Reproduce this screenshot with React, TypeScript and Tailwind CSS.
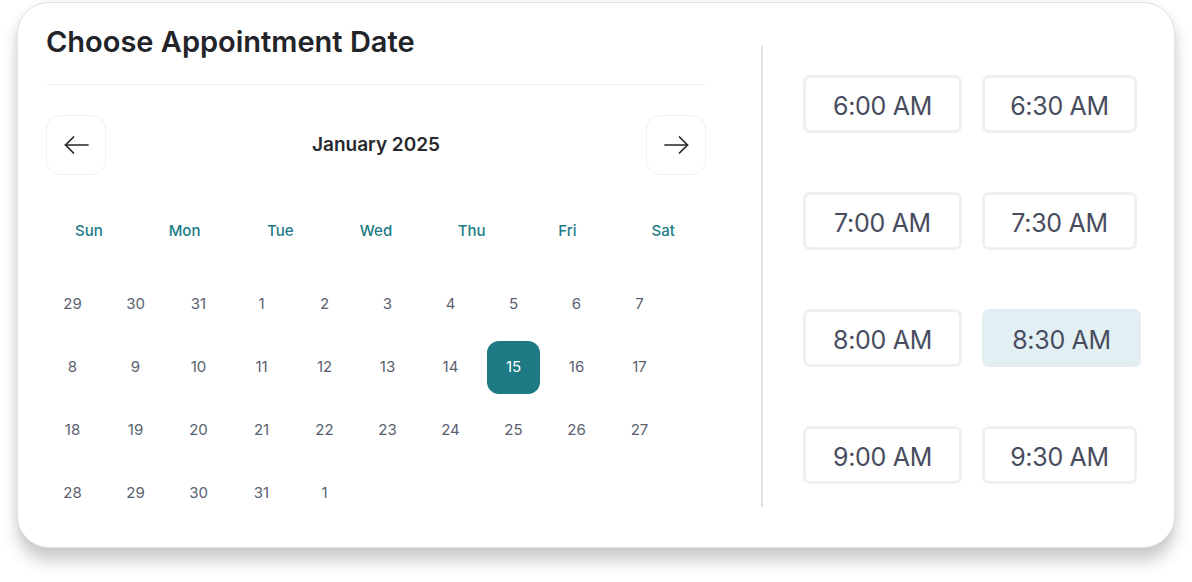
const days = ["Sun", "Mon", "Tue", "Wed", "Thu", "Fri", "Sat"]

const dates = [
    29, 30, 31, 1, 2, 3, 4, 5, 6, 7,
    8, 9, 10, 11, 12, 13, 14, 15, 16, 17,
    18, 19, 20, 21, 22, 23, 24, 25, 26, 27,
    28, 29, 30, 31, 1,
]

const slots = [
    ["6:00 AM", "6:30 AM"],
    ["7:00 AM", "7:30 AM"],
    ["8:00 AM", "8:30 AM"],
    ["9:00 AM", "9:30 AM"],
]

const Arrow = ({ flip }: { flip?: boolean }) => (
    <svg
        width="25"
        height="18"
        viewBox="0 0 25 18"
        fill="none"
        stroke="#232529"
        strokeWidth="1.7"
        strokeLinecap="round"
        strokeLinejoin="round"
        className={flip ? "-scale-x-100" : ""}
    >
        <path d="M24 9H1.5" />
        <path d="M9.5 1L1.5 9l8 8" />
    </svg>
)

const App = () => {
    return (
        <div className="w-[1192px] h-[582px] bg-white font-['Inter',sans-serif] pt-[2px] pl-[17px]">
            {/* Card */}
            <div className="flex w-[1158px] h-[546px] rounded-[32px] border border-[#e2e2e2] bg-white shadow-[0_13px_16px_rgba(0,0,0,0.2),0_0_8px_rgba(0,0,0,0.05)] pl-[28px]">
                {/* Calendar */}
                <div className="w-[660px] pt-[22px]">
                    <h1 className="text-[29px] leading-[34px] font-semibold text-[#222429]">
                        Choose Appointment Date
                    </h1>
                    <div className="mt-[25px] h-px bg-[#f0f1f3]" />

                    <div className="mt-[30px] flex items-center justify-between">
                        <button className="w-[60px] h-[60px] rounded-[14px] border border-[#efefef] flex items-center justify-center">
                            <Arrow />
                        </button>
                        <span className="text-[19px] font-semibold text-[#26282d]">
                            January 2025
                        </span>
                        <button className="w-[60px] h-[60px] rounded-[14px] border border-[#efefef] flex items-center justify-center">
                            <Arrow flip />
                        </button>
                    </div>

                    <div className="mt-[46px] grid grid-cols-7 gap-x-[10px]">
                        {days.map((d) => (
                            <div
                                key={d}
                                className="text-center text-[15px] leading-[20px] font-medium text-[#1c7b86]"
                            >
                                {d}
                            </div>
                        ))}
                    </div>

                    <div className="mt-[37px] grid grid-cols-[repeat(10,53px)] gap-[10px]">
                        {dates.map((d, i) => (
                            <div
                                key={i}
                                className={`h-[53px] flex items-center justify-center rounded-[12px] text-[15px] ${i === 17 ? "bg-[#1e7a84] text-white" : "text-[#5a5f70]"
                                    }`}
                            >
                                {d}
                            </div>
                        ))}
                    </div>
                </div>

                {/* Divider */}
                <div className="ml-[55px] mt-[43px] w-[2px] h-[461px] bg-[#e2e2e2]" />

                {/* Time slots */}
                <div className="ml-[40px] pt-[72px] flex flex-col gap-[59px]">
                    {slots.map((row, r) => (
                        <div key={r} className="flex gap-[20px]">
                            {row.map((t, c) => {
                                const active = r === 2 && c === 1
                                return (
                                    <div
                                        key={t}
                                        className={`h-[58px] pt-[6px] flex items-center justify-center rounded-[7px] border-[3px] text-[25px] tracking-[-0.3px] text-[#474c5e] ${c === 0 || active ? "w-[159px]" : "w-[155px]"
                                            } ${active ? "bg-[#e2f0f4] border-[#e4eef2]" : "bg-white border-[#eff0f2]"}`}
                                    >
                                        {t}
                                    </div>
                                )
                            })}
                        </div>
                    ))}
                </div>
            </div>
        </div>
    )
}

export default App
